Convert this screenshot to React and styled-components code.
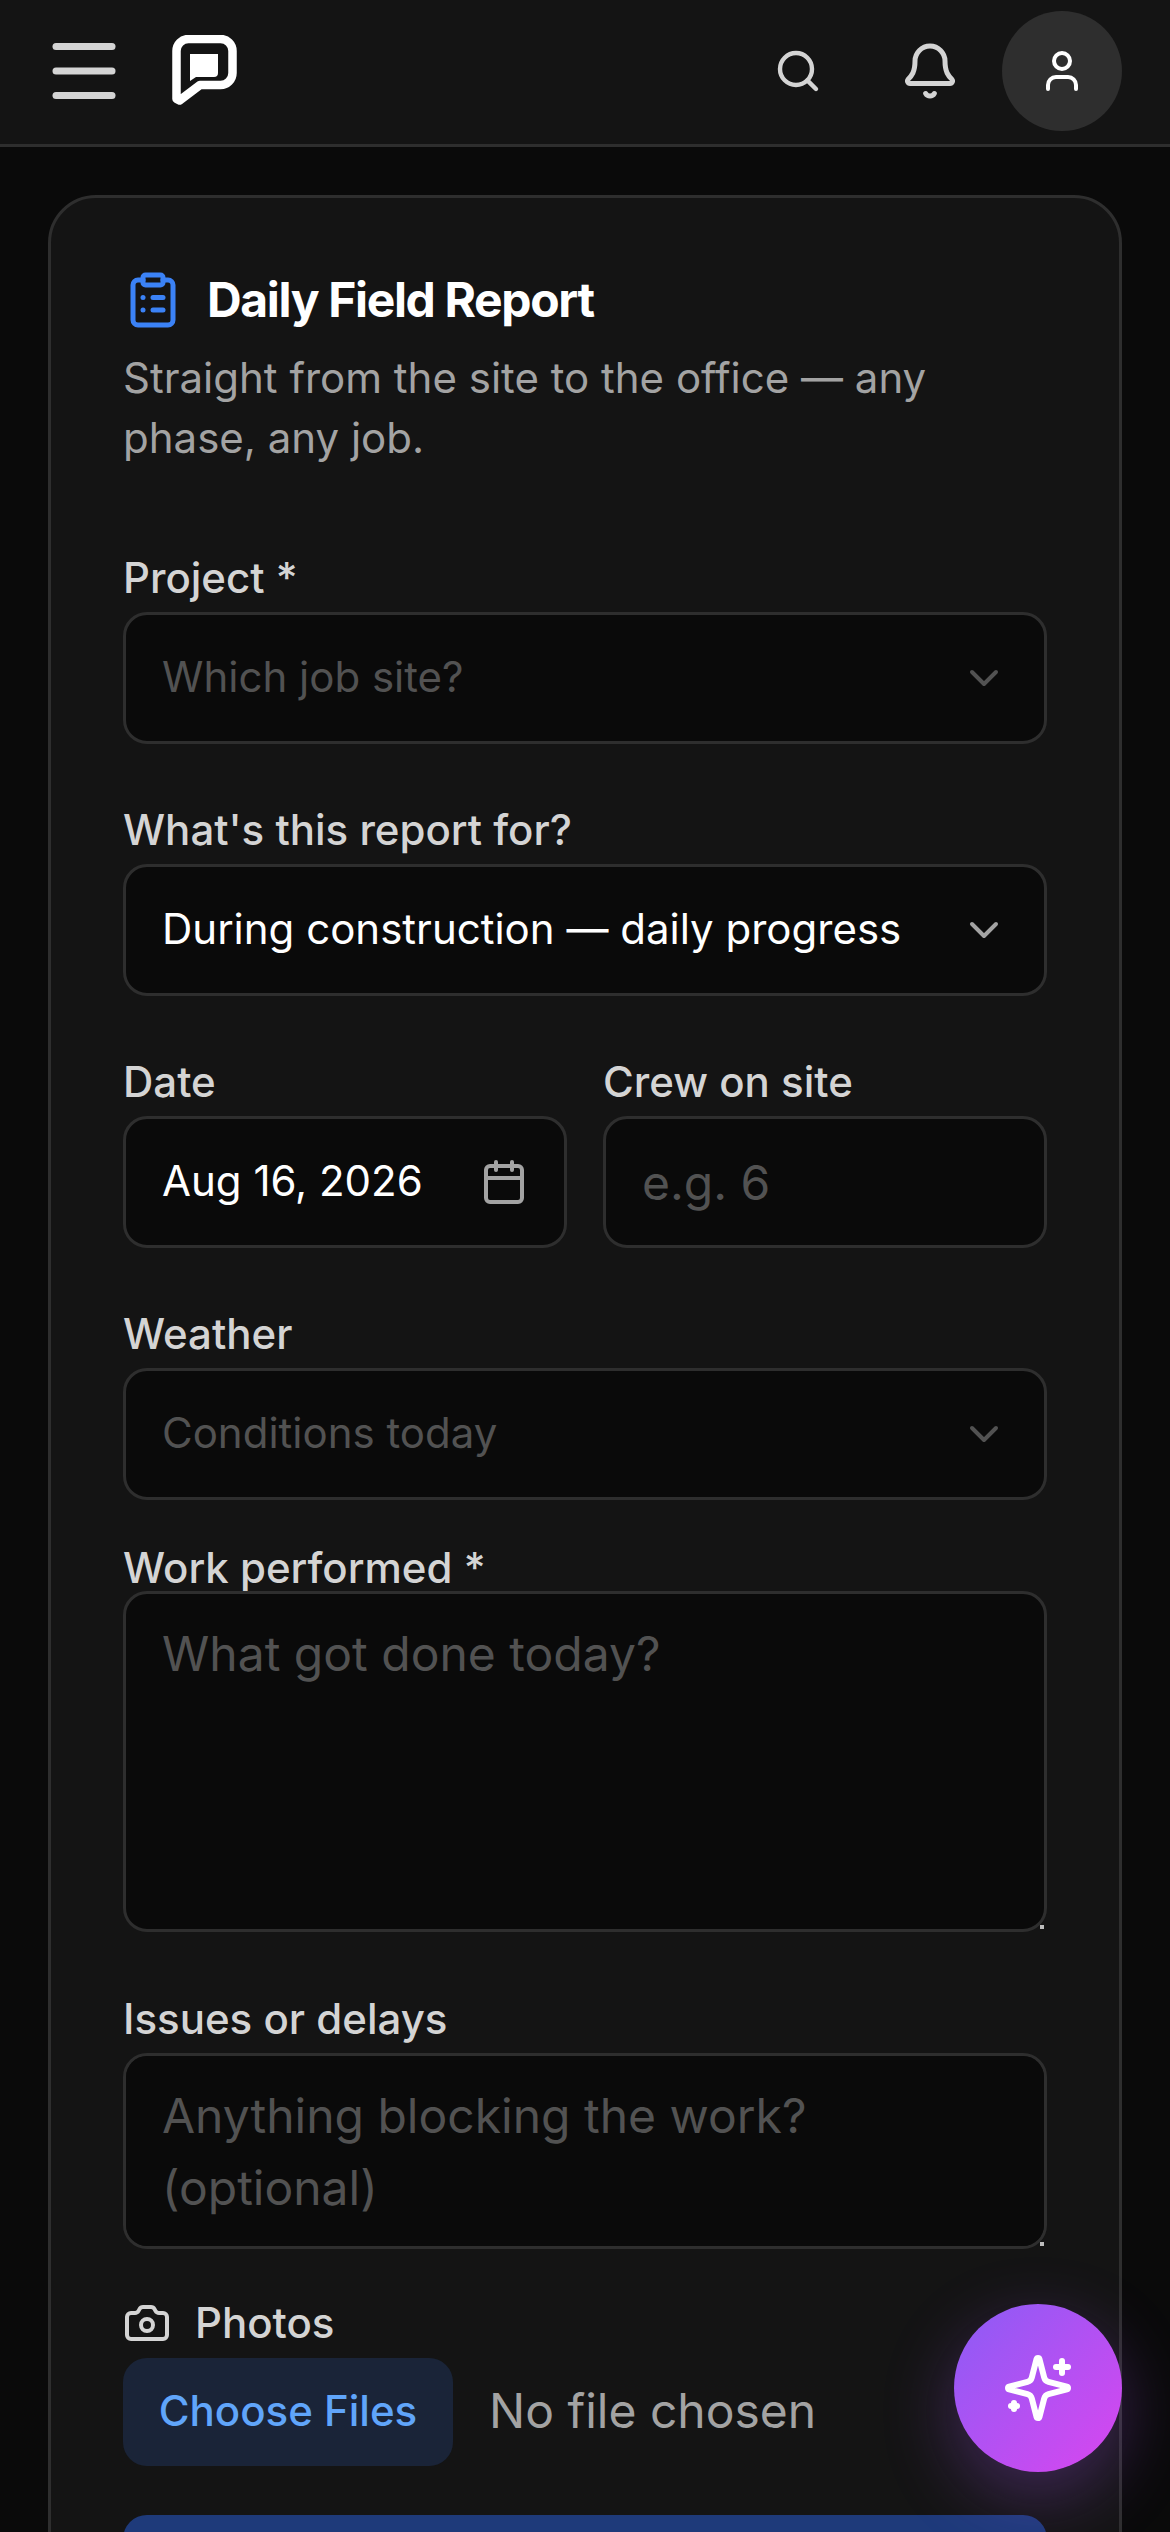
import React from 'react';
import styled, { createGlobalStyle } from 'styled-components';
import { Menu, Search, Bell, User, ClipboardList, ChevronDown, Calendar, Camera } from 'lucide-react';

const Global = createGlobalStyle`
  * { box-sizing: border-box; }
  html, body { margin: 0; background: #0a0a0a; }
  body { font-family: Inter, "Noto Sans", sans-serif; color: #fff; }
  button, input, textarea { font-family: inherit; }
`;

const Page = styled.div`
  min-height: 2532px;
  background: #0a0a0a;
`;

const Header = styled.header`
  display: flex;
  align-items: center;
  height: 147px;
  padding: 0 48px 3px 24px;
  background: #141414;
  border-bottom: 3px solid #2e2e2e;
`;

const IconButton = styled.button`
  display: flex;
  align-items: center;
  justify-content: center;
  width: 120px;
  height: 120px;
  padding: 0;
  border: 0;
  border-radius: 50%;
  background: ${(p) => (p.$filled ? '#2e2e2e' : 'transparent')};
  color: ${(p) => (p.$filled ? '#fff' : '#d4d4d4')};
`;

const Logo = styled.svg`
  display: block;
  width: 65px;
  height: 71px;
  margin-left: 28px;
`;

const HeaderActions = styled.div`
  display: flex;
  gap: 12px;
  margin-left: auto;
`;

const Main = styled.main`
  padding: 48px;
`;

const Card = styled.section`
  padding: 72px;
  background: #141414;
  border: 3px solid #2e2e2e;
  border-radius: 48px;
`;

const TitleRow = styled.div`
  display: flex;
  align-items: center;
  gap: 24px;
  height: 60px;
  color: #3b82f6;
`;

const Title = styled.h1`
  margin: 0;
  font-size: 48px;
  line-height: 60px;
  font-weight: 700;
  letter-spacing: -1.35px;
  color: #fff;
`;

const Description = styled.p`
  margin: 18px 0 80px;
  font-size: 42px;
  line-height: 60px;
  color: #a3a3a3;
`;

const Field = styled.div`
  display: flex;
  flex-direction: column;
  min-width: 0;
  margin-bottom: ${(p) => p.$after ?? 56}px;
`;

const Row = styled.div`
  display: grid;
  grid-template-columns: 1fr 1fr;
  gap: 36px;
`;

const Label = styled.label`
  display: flex;
  align-items: center;
  gap: 24px;
  height: 60px;
  margin-bottom: ${(p) => p.$gap ?? 4}px;
  font-size: 42px;
  line-height: 60px;
  font-weight: 500;
  color: #d4d4d4;
`;

const Control = styled.div`
  display: flex;
  align-items: center;
  justify-content: space-between;
  height: 132px;
  padding: 0 36px;
  background: #0a0a0a;
  border: 3px solid #2e2e2e;
  border-radius: 24px;
  font-size: 42px;
  color: ${(p) => (p.$empty ? '#525252' : '#fff')};
  white-space: nowrap;
`;

const ControlText = styled.span`
  margin-top: -3px;
`;

const ControlIcon = styled.span`
  display: flex;
  color: ${(p) => (p.$empty ? '#525252' : '#a3a3a3')};
`;

const TextInput = styled.input`
  display: block;
  width: 100%;
  height: 132px;
  padding: 0 36px;
  background: #0a0a0a;
  border: 3px solid #2e2e2e;
  border-radius: 24px;
  font-size: 48px;
  color: #fff;
  outline: none;
  &::placeholder { color: #525252; opacity: 1; }
`;

const TextArea = styled.textarea`
  display: block;
  width: 100%;
  height: ${(p) => p.$h}px;
  padding: 24px 36px;
  background: #0a0a0a;
  border: 3px solid #2e2e2e;
  border-radius: 24px;
  font-size: 48px;
  line-height: 72px;
  color: #fff;
  outline: none;
  &::placeholder { color: #525252; opacity: 1; }
  &::-webkit-resizer {
    background: linear-gradient(#bdbdbd, #bdbdbd) no-repeat right 0 bottom 0 / 4px 4px;
  }
`;

const FileRow = styled.div`
  display: flex;
  align-items: center;
  gap: 36px;
`;

const FileButton = styled.button`
  width: 330px;
  height: 108px;
  padding: 0 0 3px;
  border: 0;
  border-radius: 24px;
  background: #1a2438;
  color: #60a5fa;
  font-size: 42px;
  font-weight: 500;
`;

const FileStatus = styled.span`
  margin-top: -3px;
  font-size: 48px;
  color: #a3a3a3;
`;

const Submit = styled.button`
  display: block;
  width: 100%;
  height: 144px;
  padding: 0;
  border: 0;
  border-radius: 24px;
  background: #1e3a7a;
`;

const Fab = styled.button`
  position: fixed;
  right: 48px;
  top: 2304px;
  display: flex;
  align-items: center;
  justify-content: center;
  width: 168px;
  height: 168px;
  padding: 0;
  border: 0;
  border-radius: 50%;
  color: #fff;
  background: linear-gradient(135deg, #8b5cf6, #d946ef);
  box-shadow: 0 24px 72px rgba(168, 85, 247, 0.3);
`;

const Select = ({ children, empty }) => (
  <Control $empty={empty}>
    <ControlText>{children}</ControlText>
    <ControlIcon $empty={empty}><ChevronDown size={48} strokeWidth={2} /></ControlIcon>
  </Control>
);

const SparkleIcon = () => (
  <svg width="72" height="72" viewBox="0 0 24 24" fill="none" stroke="currentColor" strokeWidth="2" strokeLinecap="round" strokeLinejoin="round">
    <path d="M9.937 15.5A2 2 0 0 0 8.5 14.063l-6.135-1.582a.5.5 0 0 1 0-.962L8.5 9.936A2 2 0 0 0 9.937 8.5l1.582-6.135a.5.5 0 0 1 .963 0L14.063 8.5A2 2 0 0 0 15.5 9.937l6.135 1.581a.5.5 0 0 1 0 .964L15.5 14.063a2 2 0 0 0-1.437 1.437l-1.582 6.135a.5.5 0 0 1-.963 0z" />
    <path d="M20 3v4" />
    <path d="M22 5h-4" />
    <path d="M4 17v2" />
    <path d="M5 18H3" />
  </svg>
);

export default function App() {
  return (
    <Page>
      <Global />
      <Header>
        <IconButton aria-label="Menu"><Menu size={84} strokeWidth={2} /></IconButton>
        <Logo viewBox="0 0 65 71" fill="none" aria-label="Logo">
          <path d="M4.5 16a12 12 0 0 1 12-12H48.5a12 12 0 0 1 12 12V38a12 12 0 0 1-12 12H28L7.5 65.5 4.5 64Z" stroke="#fff" strokeWidth="8.5" strokeLinejoin="round" />
          <path d="M18 19H46V38a4 4 0 0 1-4 4H24L18 46Z" fill="#fff" />
        </Logo>
        <HeaderActions>
          <IconButton aria-label="Search"><Search size={48} strokeWidth={2.2} /></IconButton>
          <IconButton aria-label="Notifications"><Bell size={60} strokeWidth={2} /></IconButton>
          <IconButton $filled aria-label="Account"><User size={48} strokeWidth={2} /></IconButton>
        </HeaderActions>
      </Header>
      <Main>
        <Card>
          <TitleRow>
            <ClipboardList size={60} strokeWidth={2} />
            <Title>Daily Field Report</Title>
          </TitleRow>
          <Description>Straight from the site to the office — any phase, any job.</Description>

          <Field>
            <Label>Project *</Label>
            <Select empty>Which job site?</Select>
          </Field>
          <Field>
            <Label>What's this report for?</Label>
            <Select>During construction — daily progress</Select>
          </Field>
          <Row>
            <Field>
              <Label>Date</Label>
              <Control>
                <ControlText>Aug 16, 2026</ControlText>
                <ControlIcon><Calendar size={48} strokeWidth={2} /></ControlIcon>
              </Control>
            </Field>
            <Field>
              <Label>Crew on site</Label>
              <TextInput placeholder="e.g. 6" />
            </Field>
          </Row>
          <Field $after={38}>
            <Label>Weather</Label>
            <Select empty>Conditions today</Select>
          </Field>
          <Field $after={57}>
            <Label $gap={-7}>Work performed *</Label>
            <TextArea $h={341} placeholder="What got done today?" />
          </Field>
          <Field $after={44}>
            <Label>Issues or delays</Label>
            <TextArea $h={196} placeholder="Anything blocking the work? (optional)" />
          </Field>
          <Field $after={49}>
            <Label $gap={5}><Camera size={48} strokeWidth={2} />Photos</Label>
            <FileRow>
              <FileButton>Choose Files</FileButton>
              <FileStatus>No file chosen</FileStatus>
            </FileRow>
          </Field>
          <Submit aria-label="Submit" />
        </Card>
      </Main>
      <Fab aria-label="Assistant"><SparkleIcon /></Fab>
    </Page>
  );
}
